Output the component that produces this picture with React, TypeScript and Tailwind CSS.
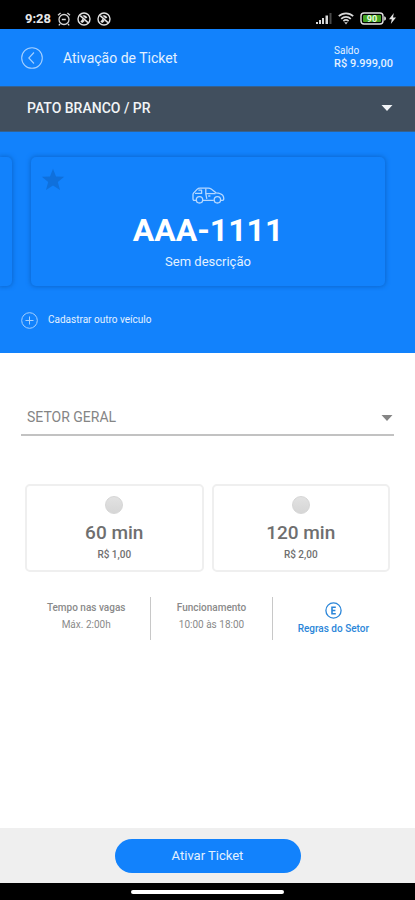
import React, { useState } from "react";

const vehicle = { plate: "AAA-1111", description: "Sem descrição" };

const tickets = [
  { id: "60", label: "60 min", price: "R$ 1,00" },
  { id: "120", label: "120 min", price: "R$ 2,00" },
];

function AlarmIcon() {
  return (
    <svg className="size-[14px]" viewBox="0 0 14 14" fill="none" stroke="#d6d6d6" strokeWidth="1.3" aria-hidden="true">
      <circle cx="7" cy="7.5" r="5" />
      <path d="M1 3.2 3.6 1M13 3.2 10.4 1M4.8 7.5h4M3 12l-1.2 1.4M11 12l1.2 1.4" />
    </svg>
  );
}

function AppBadgeIcon() {
  return (
    <svg className="size-[14px]" viewBox="0 0 14 14" fill="none" stroke="#e2e2e2" strokeWidth="1.4" aria-hidden="true">
      <circle cx="7" cy="7" r="6" />
      <path d="m3.2 3.6 7.8 7" strokeWidth="1.5" />
      <path d="M5.4 3.6q3.6-1.4 5 2.2L8.6 6.4z" fill="#e2e2e2" stroke="none" />
      <path d="m3.4 9.8 2.2-3 2 2.2-2.2 2z" fill="#e2e2e2" stroke="none" />
    </svg>
  );
}

function SignalIcon() {
  return (
    <svg className="h-[13px] w-[16px]" viewBox="0 0 16 13" fill="#d8d8d8" aria-hidden="true">
      <rect x="0" y="10" width="2" height="2" />
      <rect x="3" y="8" width="2" height="4" />
      <rect x="6" y="6" width="2" height="6" />
      <rect x="9.5" y="3.5" width="2.5" height="8.5" />
      <rect x="13.5" y="1" width="2" height="11" fill="#4a4a4a" />
    </svg>
  );
}

function WifiIcon() {
  return (
    <svg className="h-[13px] w-[16px]" viewBox="0 0 16 13" fill="none" stroke="#d8d8d8" strokeWidth="1.7" aria-hidden="true">
      <path d="M.8 4.2a10.4 10.4 0 0 1 14.4 0M3.2 6.8a7 7 0 0 1 9.6 0M5.4 9.2a3.8 3.8 0 0 1 5.2 0" />
      <path d="M6.2 10.3h3.6L8 12.4z" fill="#d8d8d8" stroke="none" />
    </svg>
  );
}

function BatteryIcon() {
  return (
    <svg className="h-[13px] w-[27px]" viewBox="0 0 27 13" aria-hidden="true">
      <rect x="1" y="1" width="22" height="11" rx="3" fill="none" stroke="#e4e4e4" strokeWidth="1.4" />
      <rect x="3" y="3" width="18" height="7" rx="1" fill="#43a321" />
      <path d="M24.2 4.3q1.8.4 1.8 2.2t-1.8 2.2z" fill="#e4e4e4" />
      <text x="12" y="9.6" textAnchor="middle" className="font-['Roboto',sans-serif] text-[9px] font-bold" fill="#e9ffe0">90</text>
    </svg>
  );
}

function BoltIcon() {
  return (
    <svg className="h-[11px] w-[7px]" viewBox="0 0 7 11" fill="#e4e4e4" aria-hidden="true">
      <path d="M4.8 0 0 6.2h2.8L1.8 11 7 4.6H4z" />
    </svg>
  );
}

function BackIcon() {
  return (
    <svg className="size-[22px]" viewBox="0 0 22 22" fill="none" stroke="#a5d0ff" strokeWidth="1.1" aria-hidden="true">
      <circle cx="11" cy="11" r="10.3" />
      <path d="M13 5.5 7.8 11l5.2 5.5" />
    </svg>
  );
}

function CarIcon() {
  return (
    <svg className="h-[17px] w-[33px]" viewBox="0 0 33 17" fill="none" stroke="#b5d8ff" strokeWidth="1.3" strokeLinejoin="round" aria-hidden="true">
      <path d="M4.2 13.4H2.4Q1 13.4 1 12V7.6Q1 6.4 2 5.6l3-3.2Q6.2 1.2 8 1.2h8.4q1.6 0 2.8.9l4.8 3.7q5.2.5 6.8 2.5 1 1.3 1 3.7 0 1.4-1.4 1.4H29M10.8 13.4h11" />
      <circle cx="7.5" cy="12.8" r="3.2" />
      <circle cx="25.4" cy="12.8" r="3.2" />
      <path d="M3 6.4h6.6V3.2H6.4M13.8 1.4v5.2l1 5.2M13.8 6.6h9.8M16.2 9h2.2" />
    </svg>
  );
}

function PlusIcon() {
  return (
    <svg className="size-[17px]" viewBox="0 0 17 17" fill="none" stroke="#a5d0ff" aria-hidden="true">
      <circle cx="8.5" cy="8.5" r="7.8" />
      <path d="M8.5 4.5v8M4.5 8.5h8" />
    </svg>
  );
}

function StarIcon() {
  return (
    <svg className="size-[24px]" viewBox="0 0 24 24" fill="#0f70dc" aria-hidden="true">
      <path d="m12 .8 3 7.6 8.2.4-6.4 5.1 2.2 8L12 17.4l-7 4.5 2.2-8L.8 8.8 9 8.4z" />
    </svg>
  );
}

function RulesIcon() {
  return (
    <svg className="size-[17px]" viewBox="0 0 17 17" fill="none" stroke="#2b86d9" aria-hidden="true">
      <circle cx="8.5" cy="8.5" r="7.6" strokeWidth="1.3" />
      <path d="M10.8 5.2H7v6.6h3.8M7 8.5h3.4" strokeWidth="1.6" />
    </svg>
  );
}

function Caret() {
  return (
    <svg className="pointer-events-none h-[6px] w-[12px] shrink-0" viewBox="0 0 12 6" fill="currentColor" aria-hidden="true">
      <path d="M.5 0h11L6 6z" />
    </svg>
  );
}

function StatusBar() {
  return (
    <div className="flex h-[29px] items-center justify-between bg-black pt-2 pr-[19px] pl-[25px]">
      <div className="flex items-center gap-[6px]">
        <span className="text-[13px] leading-[14px] font-bold text-[#e8e8e8]">9:28</span>
        <AlarmIcon />
        <AppBadgeIcon />
        <AppBadgeIcon />
      </div>
      <div className="flex items-center gap-[6px]">
        <SignalIcon />
        <WifiIcon />
        <div className="flex items-center gap-[2px]">
          <BatteryIcon />
          <BoltIcon />
        </div>
      </div>
    </div>
  );
}

export default function App() {
  const [ticket, setTicket] = useState("");

  return (
    <div className="flex min-h-screen flex-col bg-white font-['Roboto',sans-serif]">
      <StatusBar />

      <header className="flex h-[57px] items-center bg-[#1282fc] pr-5 pl-[21px] text-[#e3f1ff]">
        <button type="button" aria-label="Voltar" className="mr-5">
          <BackIcon />
        </button>
        <h1 className="flex-1 text-[14px] leading-5">Ativação de Ticket</h1>
        <div className="w-[61px] whitespace-nowrap">
          <p className="text-[10px] leading-[12px]">Saldo</p>
          <p className="text-[11px] leading-[13px] font-medium">R$ 9.999,00</p>
        </div>
      </header>

      <div className="flex h-[46px] items-center border-y border-[#35618f] bg-[#414f5e] pr-[22px] pb-[2px] pl-[27px] text-[#f1f4f7]">
        <select aria-label="Cidade" className="-mr-3 h-full flex-1 appearance-none bg-transparent text-[14px] font-medium outline-none">
          <option>PATO BRANCO / PR</option>
        </select>
        <Caret />
      </div>

      <section className="bg-[#1282fc] pt-[20px] pb-[24px] text-[#e3f1ff]">
        <div className="flex gap-[19px] overflow-hidden py-[5px] pr-[30px]">
          <div className="w-3 shrink-0 rounded-r-[5px] shadow-[0_0_4px_1px_#0c69d2]" />
          <article className="relative flex h-[129px] flex-1 flex-col items-center rounded-[5px] pt-[30px] shadow-[0_0_4px_1px_#0c69d2]">
            <button type="button" aria-label="Favoritar veículo" className="absolute top-[11px] left-[10px]">
              <StarIcon />
            </button>
            <CarIcon />
            <h2 className="mt-[6px] text-[32px] leading-[40px] font-bold text-white">{vehicle.plate}</h2>
            <p className="mt-[4px] text-[13px] leading-[16px]">{vehicle.description}</p>
          </article>
        </div>
        <button type="button" className="mt-[20px] ml-[21px] flex items-center gap-[10px] text-[10px] leading-[18px]">
          <PlusIcon />
          Cadastrar outro veículo
        </button>
      </section>

      <main className="flex-1 px-[21px] pt-[46px]">
        <div className="flex h-[37px] items-center border-b-2 border-[#c2c2c2] pt-[2px] pr-px pl-[6px] text-[#858585]">
          <select aria-label="Setor" className="-mr-3 h-full flex-1 appearance-none bg-transparent text-[14px] outline-none">
            <option>SETOR GERAL</option>
          </select>
          <Caret />
        </div>

        <div role="radiogroup" aria-label="Tempo" className="mx-1 mt-[48px] grid grid-cols-2 gap-2">
          {tickets.map((t) => (
            <label
              key={t.id}
              className="flex h-[88px] cursor-pointer flex-col items-center rounded-[5px] border-2 border-[#efefef] pt-[10px] text-[#6f6f6f]"
            >
              <input
                type="radio"
                name="ticket"
                checked={ticket === t.id}
                onChange={() => setTicket(t.id)}
                className="size-[18px] appearance-none rounded-full border border-[#d6d6d6] bg-linear-to-b from-[#e2e2e2] to-[#d6d6d6] checked:from-[#1282fc] checked:to-[#1282fc]"
              />
              <span className="mt-[7px] text-[19px] leading-[24px] font-medium">{t.label}</span>
              <span className="mt-[4px] text-[10px] leading-[12px] font-medium">{t.price}</span>
            </label>
          ))}
        </div>

        <div className="mt-[25px] grid h-[43px] grid-cols-3 divide-x divide-[#c8c8c8] pl-[9px] text-center text-[10px] leading-[14px] whitespace-nowrap text-[#8a8a8a]">
          <div className="pt-[4px] pr-[8px]">
            <h3 className="font-medium">Tempo nas vagas</h3>
            <p className="mt-[3px]">Máx. 2:00h</p>
          </div>
          <div className="pt-[4px]">
            <h3 className="font-medium">Funcionamento</h3>
            <p className="mt-[3px]">10:00 às 18:00</p>
          </div>
          <a href="#regras" className="flex flex-col items-center pt-[5px] font-medium text-[#2b86d9]">
            <RulesIcon />
            <span className="mt-[3px]">Regras do Setor</span>
          </a>
        </div>
      </main>

      <footer className="flex h-[55px] items-center justify-center bg-[#efefef] pt-px">
        <button type="button" className="h-[34px] w-[186px] rounded-full bg-[#1282fc] text-[13px] text-[#e3f1ff]">
          Ativar Ticket
        </button>
      </footer>
      <div className="flex h-[17px] items-center justify-center bg-black pt-px">
        <div className="h-[4px] w-[153px] rounded-full bg-white" />
      </div>
    </div>
  );
}
